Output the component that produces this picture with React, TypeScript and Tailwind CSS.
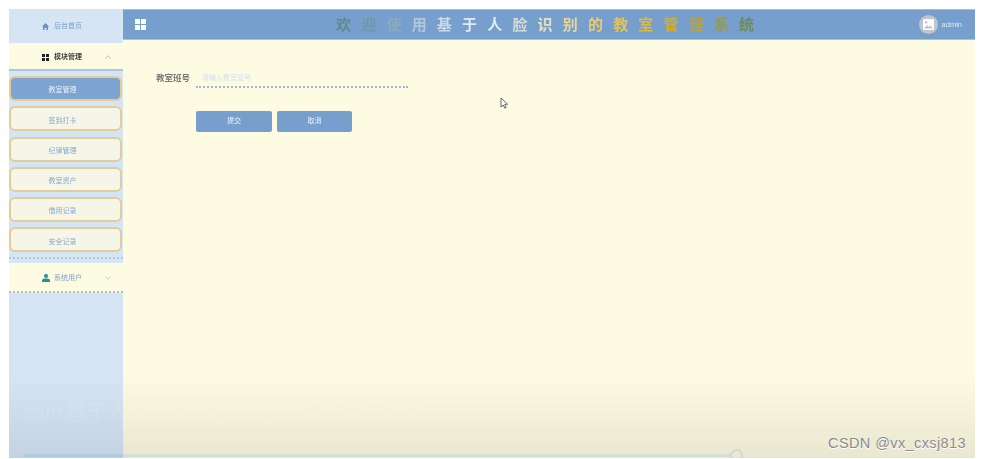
import { ChevronDown, ChevronUp } from "lucide-react";

const FONT = "font-['Liberation_Sans','Noto_Sans_CJK_SC',sans-serif]";

const TITLE = [
  { ch: "欢", color: "text-[#5f8a8f]" },
  { ch: "迎", color: "text-[#6f98a5]" },
  { ch: "使", color: "text-[#8eaabb]" },
  { ch: "用", color: "text-[#b0c6da]" },
  { ch: "基", color: "text-[#ccd9e6]" },
  { ch: "于", color: "text-[#e2e9ee]" },
  { ch: "人", color: "text-[#e4ebe8]" },
  { ch: "脸", color: "text-[#d4dcd6]" },
  { ch: "识", color: "text-[#e2e2c0]" },
  { ch: "别", color: "text-[#e6d998]" },
  { ch: "的", color: "text-[#eacd6a]" },
  { ch: "教", color: "text-[#e6c34e]" },
  { ch: "室", color: "text-[#dfb93e]" },
  { ch: "管", color: "text-[#cdae3a]" },
  { ch: "理", color: "text-[#b8a23e]" },
  { ch: "系", color: "text-[#999849]" },
  { ch: "统", color: "text-[#6f8a55]" },
];

const MENU = ["签到打卡", "纪律管理", "教室资产", "借用记录", "安全记录"];

function Blocks({ size, gap, fill }: { size: number; gap: number; fill: string }) {
  const cell = (size - gap) / 2;
  const far = cell + gap;
  return (
    <svg width={size} height={size} viewBox={`0 0 ${size} ${size}`} className="shrink-0">
      <rect width={cell} height={cell} fill={fill} />
      <rect x={far} width={cell} height={cell} fill={fill} />
      <rect y={far} width={cell} height={cell} fill={fill} />
      <rect x={far} y={far} width={cell} height={cell} fill={fill} />
    </svg>
  );
}

function MenuItem({ label, active }: { label: string; active?: boolean }) {
  return (
    <div
      className={`mr-px flex h-[25px] items-center justify-center rounded-[6px] border-2 border-[#e3cc98] pr-[6px] pt-[4px] text-[7px] ${
        active ? "bg-[#7ea5d2] text-[#e6eef6]" : "bg-[#f5f6e8] text-[#8aa9cc]"
      }`}
    >
      {label}
    </div>
  );
}

export default function App() {
  return (
    <div className={`relative h-[459px] w-[981px] overflow-hidden bg-white pb-[1px] pl-[9px] pr-[6px] pt-[9px] ${FONT}`}>
      <div className="relative flex h-[449px] w-[966px] overflow-hidden bg-[#fdfbe2] blur-[0.7px]">
        {/* Sidebar */}
        <aside className="flex w-[114px] shrink-0 flex-col bg-[#d5e5f4]">
          <div className="flex h-[34px] items-center pl-[33px] text-[7px] text-[#7ea0c8]">
            <svg width="7" height="7" viewBox="0 0 7 7" className="mr-[5px] shrink-0">
              <path d="M0 3.5 3.5 0 7 3.5H6V7H4.4V5H2.6V7H1V3.5z" fill="#6f93bd" />
            </svg>
            <span>后台首页</span>
          </div>

          <div className="flex h-[28px] items-center border-b-2 border-[#a9c6e2] bg-[#fdfbe2] pl-[33px] pr-[10px] pt-[2px] text-[7px] font-bold text-[#444]">
            <span className="mr-[5px]">
              <Blocks size={7} gap={1} fill="#222" />
            </span>
            <span>模块管理</span>
            <ChevronUp size={10} strokeWidth={1.5} className="ml-auto text-[#999]" />
          </div>

          <div className="mt-[5px] flex flex-col gap-[5.3px]">
            <MenuItem label="教室管理" active />
            {MENU.map((label) => (
              <MenuItem key={label} label={label} />
            ))}
          </div>

          <div className="mt-[5px] border-t-2 border-dotted border-[#b4c9de]" />

          <div className="mt-[4px] flex h-[30px] items-center border-b-2 border-dotted border-[#a5c0d8] bg-[#fdfbe2] pl-[33px] pr-[10px] pt-[1px] text-[7px] text-[#7ea0c8]">
            <svg width="8" height="8" viewBox="0 0 8 8" className="mr-[4px] shrink-0">
              <circle cx="4" cy="2" r="2" fill="#2d8a94" />
              <path d="M0 8V6.6C0 5.2 1.6 4.6 4 4.6s4 .6 4 2V8z" fill="#2d8a94" />
            </svg>
            <span>系统用户</span>
            <ChevronDown size={10} strokeWidth={1.5} className="ml-auto text-[#8fb3c4]" />
          </div>
        </aside>

        <div className="flex min-w-0 flex-1 flex-col">
          {/* Top bar */}
          <header className="flex h-[31px] items-center border-b border-[#a9c2dc] border-t border-t-[#a5bcd6] bg-[#769fcd] pl-[12px] pr-[13px]">
            <Blocks size={11} gap={1} fill="#fff" />
            <div className="ml-[185px] flex text-[15px] font-bold leading-none">
              {TITLE.map(({ ch, color }) => (
                <span key={ch} className={`w-[25.2px] text-center ${color}`}>
                  {ch}
                </span>
              ))}
            </div>
            <div className="ml-auto flex items-center gap-[4px]">
              <div className="flex h-[19px] w-[19px] items-center justify-center rounded-full bg-[#c0c4cc]">
                <svg width="11" height="11" viewBox="0 0 11 11">
                  <rect width="11" height="11" rx="1" fill="#fff" />
                  <circle cx="3.2" cy="3.4" r="1.2" fill="#c0c4cc" />
                  <path d="M1 9.5 4 6l2 2 1.6-1.5L10 9.5z" fill="#c0c4cc" />
                </svg>
              </div>
              <span className="text-[7.5px] text-[#dfe9f2]">admin</span>
            </div>
          </header>

          {/* Form */}
          <main className="pl-[33px] pt-[28px]">
            <div className="flex h-[20px] items-center">
              <span className="w-[40px] text-[8.5px] font-bold text-[#7a7a7a]">教室班号</span>
              <span className="ml-[6px] text-[7px] text-[#d0e0ee]">请输入教室班号</span>
            </div>
            <div className="ml-[40px] mt-[-3px] w-[212px] border-b-2 border-dotted border-[#9fb8d2] pt-[1px]" />
            <div className="ml-[40px] mt-[23px] flex gap-[5px]">
              <button className="h-[21px] w-[76px] rounded-[2px] bg-[#769fcd] text-[7px] text-[#eef3f8]">提交</button>
              <button className="h-[21px] w-[75px] rounded-[2px] bg-[#769fcd] text-[7px] text-[#eef3f8]">取消</button>
            </div>
          </main>
        </div>

        {/* Video player shade */}
        <div className="pointer-events-none absolute bottom-0 left-0 right-0 h-[84px] bg-gradient-to-b from-black/0 to-black/[0.08]" />
        <div className="pointer-events-none absolute bottom-[36px] left-[15px] whitespace-nowrap text-[21px] leading-none text-white/[0.1] [word-spacing:-3px]">
          ssm 基于人脸识别的教室管理系统 演示视频
        </div>
        <div className="absolute bottom-[1px] left-[15px] h-[3px] w-[708px] bg-[#d5dfd5] [background-image:linear-gradient(to_right,#b0c8e0_99px,transparent_99px)]" />
        <div className="absolute bottom-[-4px] left-[721px] h-[13px] w-[13px] rounded-full border-2 border-[#cfdad2]" />

        {/* Mouse cursor */}
        <svg width="9" height="12" viewBox="0 0 9 12" className="absolute left-[491px] top-[88px]">
          <path d="M1 1v9l2.2-2 1.6 3.2 1.4-.7L4.7 7.4 7.6 7.2z" fill="#fff" stroke="#444" strokeWidth="0.8" />
        </svg>
      </div>

      {/* Watermark sits on top of the recording and stays sharp */}
      <div className="absolute bottom-[9px] right-[15px] text-[14.5px] leading-none tracking-[0.4px] text-[#8c8c8c] [text-shadow:0_1px_0_#fff]">
        CSDN @vx_cxsj813
      </div>
    </div>
  );
}
